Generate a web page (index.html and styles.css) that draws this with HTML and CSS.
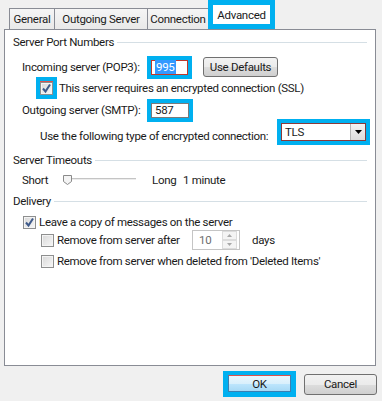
FILE: index.html
```html
<!DOCTYPE html>
<html lang="en">
<head>
    <meta charset="UTF-8">
    <title>Advanced</title>
    <link rel="stylesheet" href="styles.css">
</head>
<body>
    <div class="tabs">
        <div class="tab tab-general">General</div>
        <div class="tab tab-outgoing">Outgoing Server</div>
        <div class="tab tab-connection">Connection</div>
        <div class="tab tab-active">Advanced</div>
    </div>

    <div class="panel">
        <div class="group-title">Server Port Numbers</div>

        <div class="row row-incoming">
            <span class="port-label">Incoming server (POP3):</span>
            <div class="mark mark-port">
                <div class="port-box port-box-red"><span class="selected">995</span></div>
            </div>
            <button class="btn btn-defaults">Use Defaults</button>
        </div>

        <div class="row row-ssl">
            <div class="mark mark-check">
                <span class="check">
                    <svg width="11" height="11" viewBox="0 0 11 11"><path d="M2 5.5 L4.5 8.5 L9 1.5" fill="none" stroke="#3f5a8a" stroke-width="2"/></svg>
                </span>
            </div>
            <span class="ssl-text">This server requires an encrypted connection (SSL)</span>
        </div>

        <div class="row row-smtp">
            <span class="port-label">Outgoing server (SMTP):</span>
            <div class="mark mark-port mark-smtp">
                <div class="port-box">587</div>
            </div>
        </div>

        <div class="row row-tls">
            <span>Use the following type of encrypted connection:</span>
            <div class="mark mark-select">
                <div class="select">
                    <span class="select-value">TLS</span>
                    <span class="select-arrow">
                        <svg width="7" height="4" viewBox="0 0 7 4"><path d="M0 0 H7 L3.5 4 Z" fill="#000"/></svg>
                    </span>
                </div>
            </div>
        </div>

        <div class="group-title group-timeouts">Server Timeouts</div>

        <div class="row row-slider">
            <span class="short-label">Short</span>
            <div class="slider">
                <svg width="9" height="10" viewBox="0 0 9 10"><path d="M0.5 0.5 H8.5 V6.5 L4.5 9.5 L0.5 6.5 Z" fill="#f4f4f4" stroke="#8a8a8a"/></svg>
            </div>
            <span class="long-label">Long</span>
            <span>1 minute</span>
        </div>

        <div class="group-title group-delivery">Delivery</div>

        <div class="row row-check row-leave">
            <span class="check">
                <svg width="11" height="11" viewBox="0 0 11 11"><path d="M2 5.5 L4.5 8.5 L9 1.5" fill="none" stroke="#3f5a8a" stroke-width="2"/></svg>
            </span>
            <span class="check-text">Leave a copy of messages on the server</span>
        </div>

        <div class="row row-check row-sub">
            <span class="check"></span>
            <span class="check-text after-label">Remove from server after</span>
            <div class="spinner">
                <span class="spinner-value">10</span>
                <span class="spin-buttons">
                    <span class="spin-btn">
                        <svg width="5" height="3" viewBox="0 0 5 3"><path d="M0 3 H5 L2.5 0 Z" fill="#a8a8a8"/></svg>
                    </span>
                    <span class="spin-btn">
                        <svg width="5" height="3" viewBox="0 0 5 3"><path d="M0 0 H5 L2.5 3 Z" fill="#a8a8a8"/></svg>
                    </span>
                </span>
            </div>
            <span class="days">days</span>
        </div>

        <div class="row row-check row-sub row-deleted">
            <span class="check"></span>
            <span class="check-text">Remove from server when deleted from 'Deleted Items'</span>
        </div>
    </div>

    <div class="footer">
        <div class="mark mark-ok">
            <button class="btn btn-ok">OK</button>
        </div>
        <button class="btn btn-cancel">Cancel</button>
    </div>
</body>
</html>
```

FILE: styles.css
```css
body {
    margin: 0;
    width: 382px;
    height: 401px;
    overflow: hidden;
    background-color: #f0f0f0;
    font-family: Roboto, "Noto Sans", sans-serif;
    font-size: 11.5px;
    letter-spacing: -0.3px;
    color: #1a1a1a;
}

/* tabs */
.tabs {
    display: flex;
    align-items: flex-end;
    height: 29px;
    padding-left: 9px;
}

.tab {
    height: 21px;
    box-sizing: border-box;
    border: 1px solid #898c95;
    border-bottom: none;
    background: linear-gradient(#f5f5f5, #e9e9e9);
    display: flex;
    align-items: center;
    justify-content: center;
    margin-right: -1px;
}

.tab-general { width: 46px; }
.tab-outgoing { width: 94px; }
.tab-connection { width: 62px; }

.tab-active {
    width: 67px;
    height: 29px;
    border: 5px solid #00b0f0;
    background: #fff;
    align-items: flex-start;
    padding-top: 3px;
}

/* panel */
.panel {
    margin-left: 4px;
    width: 372px;
    height: 337px;
    box-sizing: border-box;
    border: 1px solid #898c95;
    background-color: #fff;
    padding: 4px 8px 0 8px;
}

.group-title {
    display: flex;
    align-items: center;
    height: 16px;
    gap: 3px;
}

.group-title::after {
    content: "";
    flex: 1;
    height: 1px;
    background-color: #d5dfe5;
}

.group-timeouts { margin-top: 3px; }
.group-delivery { margin-top: 2px; }

.row {
    display: flex;
    align-items: center;
    height: 22px;
    white-space: nowrap;
}

.mark {
    box-sizing: border-box;
    border: 4px solid #00b0f0;
    flex-shrink: 0;
}

.row-incoming {
    margin-top: 6px;
    padding-left: 9px;
}

.port-label {
    width: 125px;
}

.mark-port {
    width: 45px;
    height: 23px;
}

.mark-smtp {
    width: 46px;
}

.port-box {
    height: 100%;
    box-sizing: border-box;
    border: 1px solid #7a7a7a;
    background-color: #fff;
    padding-left: 3px;
    line-height: 13px;
}

.port-box-red {
    border-color: #c0392b;
}

.selected {
    background-color: #3399ff;
    color: #fff;
    padding: 0 1px;
}

.btn {
    font-family: inherit;
    font-size: 11.5px;
    letter-spacing: inherit;
    color: #1a1a1a;
    box-sizing: border-box;
    border: 1px solid #707070;
    border-radius: 3px;
    background: linear-gradient(#f2f2f2 0%, #ebebeb 50%, #dddddd 51%, #cfcfcf 100%);
    padding: 0;
}

.btn-defaults {
    width: 75px;
    height: 20px;
    margin-left: 11px;
}

.row-ssl {
    margin-top: -1px;
    padding-left: 23px;
}

.mark-check {
    width: 21px;
    height: 22px;
    display: flex;
    align-items: center;
    justify-content: center;
    background-color: #fff;
    box-shadow: inset 0 1px 0 #d9534f;
}

.ssl-text {
    margin-left: 2px;
}

.check {
    width: 13px;
    height: 13px;
    box-sizing: border-box;
    border: 1px solid #8e8f8f;
    background: linear-gradient(135deg, #d8d8d8, #f7f7f7);
    box-shadow: inset 0 0 0 1px #f4f4f4;
    display: flex;
    align-items: center;
    justify-content: center;
    flex-shrink: 0;
}

.row-smtp {
    padding-left: 9px;
}

.row-tls {
    height: 26px;
    padding-top: 2px;
    padding-left: 27px;
}

.mark-select {
    width: 93px;
    height: 26px;
    margin-left: auto;
    margin-right: -3px;
    align-self: flex-start;
    margin-top: -4px;
}

.select {
    height: 100%;
    box-sizing: border-box;
    border: 1px solid #8b3a3a;
    background-color: #fff;
    display: flex;
    align-items: center;
}

.select-value {
    flex: 1;
    padding-left: 3px;
}

.select-arrow {
    width: 15px;
    height: 100%;
    box-sizing: border-box;
    border-left: 1px solid #b5b5b5;
    background: linear-gradient(#f3f3f3, #dcdcdc);
    display: flex;
    align-items: center;
    justify-content: center;
}

/* timeout slider */
.row-slider {
    margin-top: 1px;
    padding-left: 9px;
}

.short-label {
    width: 41px;
}

.slider {
    width: 73px;
    height: 10px;
    display: flex;
    background: linear-gradient(transparent 3px, #c4c4c4 3px, #c4c4c4 4px, #ececec 4px, #ececec 5px, transparent 5px);
}

.long-label {
    width: 31px;
    margin-left: 16px;
}

/* delivery */
.row-check {
    height: 18px;
}

.row-leave {
    margin-top: 4px;
    padding-left: 10px;
}

.check-text {
    margin-left: 3px;
}

.row-sub {
    padding-left: 28px;
}

.after-label {
    width: 135px;
}

.spinner {
    width: 48px;
    height: 20px;
    box-sizing: border-box;
    border: 1px solid #c5c5c5;
    display: flex;
    align-items: center;
    color: #6d6d6d;
    flex-shrink: 0;
}

.spinner-value {
    flex: 1;
    padding-left: 6px;
}

.spin-buttons {
    width: 15px;
    height: 100%;
    display: flex;
    flex-direction: column;
    margin-right: 2px;
}

.spin-btn {
    flex: 1;
    box-sizing: border-box;
    border: 1px solid #dcdcdc;
    background: #f4f4f4;
    display: flex;
    align-items: center;
    justify-content: center;
}

.days {
    margin-left: 12px;
}

.row-deleted {
    margin-top: 3px;
}

/* footer buttons */
.footer {
    display: flex;
    justify-content: flex-end;
    align-items: center;
    gap: 8px;
    margin-top: 5px;
    padding-right: 5px;
}

.mark-ok {
    width: 73px;
    height: 26px;
    border-width: 4px 5px 5px 5px;
}

.btn-ok {
    width: 100%;
    height: 100%;
    border-radius: 0;
    border-color: #3c7fb1;
    border-top-color: #d9534f;
    background: linear-gradient(#eaf6fd 0%, #d9f0fc 50%, #bee6fd 51%, #a7d9f5 100%);
}

.btn-cancel {
    width: 73px;
    height: 21px;
}
```
